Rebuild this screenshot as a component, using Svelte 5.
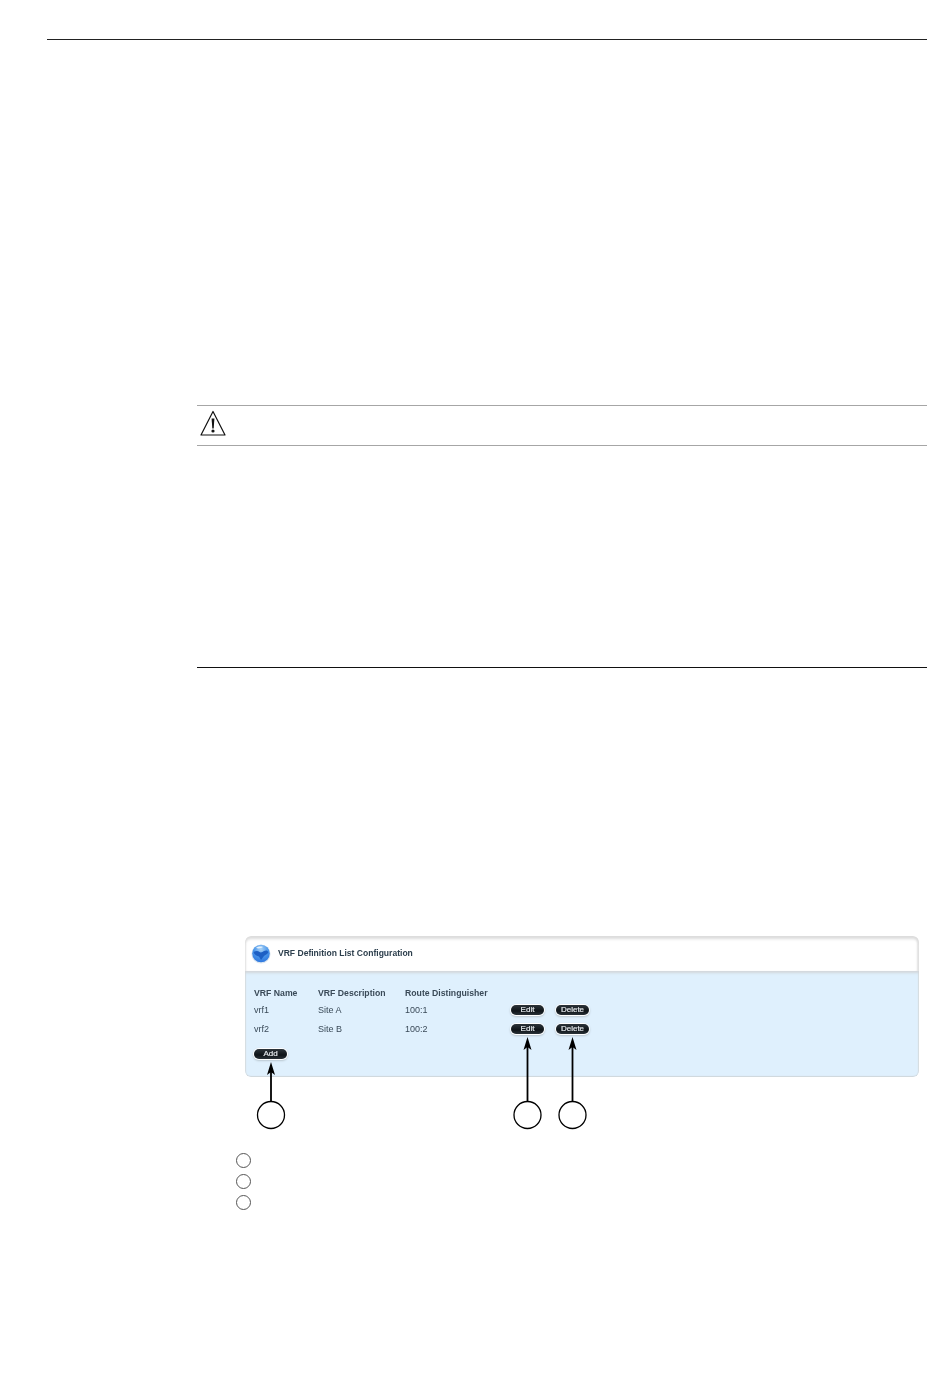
<script lang="ts">
  const rows = [
    { name: 'vrf1', description: 'Site A', distinguisher: '100:1' },
    { name: 'vrf2', description: 'Site B', distinguisher: '100:2' }
  ]
  // callout arrows, in figure coordinates
  const callouts = [
    { x: 26, tip: 126 },
    { x: 282.5, tip: 101 },
    { x: 327.5, tip: 101 }
  ]
  const legend = [1, 2, 3]
</script>

<div class="page">
  <hr class="top-rule" />

  <section class="warning">
    <div class="warning-head">
      <svg width="28" height="26" viewBox="0 0 28 26" aria-hidden="true">
        <path d="M14 1.5 L26 25 H2 Z" fill="none" stroke="#111" stroke-width="1.2" stroke-linejoin="round" />
        <path d="M12.6 8.5 H15.4 L14.7 18.5 H13.3 Z" fill="#111" />
        <circle cx="14" cy="21" r="1.6" fill="#111" />
      </svg>
    </div>
    <div class="warning-body"></div>
  </section>

  <figure class="figure">
    <div class="shot">
      <div class="shot-head">
        <svg class="globe" width="20" height="20" viewBox="0 0 20 20" aria-hidden="true">
          <defs>
            <radialGradient id="sphere" cx="50%" cy="25%" r="80%">
              <stop offset="0" stop-color="#a9d2f7" />
              <stop offset="0.5" stop-color="#4b97ea" />
              <stop offset="1" stop-color="#2a72dc" />
            </radialGradient>
          </defs>
          <circle cx="10" cy="10" r="9.6" fill="#dbe6f0" />
          <circle cx="10" cy="9.5" r="8.8" fill="url(#sphere)" />
          <path d="M2.5 8 C5 6.5 7 6.5 8.5 8 C10 9 11.5 8 13 7 C15 6 16.5 6.5 17.5 8 C16.5 10.5 14 11 13 12 L10 16 L8 12.5 C6 12 3.5 11 2.5 8 Z" fill="#1d5fc4" />
          <path d="M5 3.8 C7 2.4 10 2.2 12 3 C10.5 4.4 7 5 5 3.8 Z" fill="#e4f1fd" />
        </svg>
        <span class="shot-title">VRF Definition List Configuration</span>
      </div>
      <div class="shot-body">
        <div class="table">
          <span class="th">VRF Name</span>
          <span class="th">VRF Description</span>
          <span class="th">Route Distinguisher</span>
          <span></span>
          <span></span>
          {#each rows as row}
            <span class="td">{row.name}</span>
            <span class="td">{row.description}</span>
            <span class="td">{row.distinguisher}</span>
            <button class="pill">Edit</button>
            <button class="pill">Delete</button>
          {/each}
        </div>
        <button class="pill add">Add</button>
      </div>
    </div>

    <svg class="callouts" width="360" height="200" viewBox="0 0 360 200" aria-hidden="true">
      {#each callouts as c}
        <line x1={c.x} y1={c.tip + 6} x2={c.x} y2="170" stroke="#000" stroke-width="1.8" />
        <path d="M{c.x} {c.tip} L{c.x + 4} {c.tip + 13} L{c.x} {c.tip + 10} L{c.x - 4} {c.tip + 13} Z" fill="#000" />
        <circle cx={c.x} cy="179" r="13.5" fill="#fff" stroke="#000" stroke-width="1.3" />
      {/each}
    </svg>
  </figure>

  <ul class="legend">
    {#each legend as item (item)}
      <li class="legend-mark"></li>
    {/each}
  </ul>
</div>

<style>
  :global(body) {
    background: #fff;
  }

  .page {
    height: 1387px;
    padding: 39px 23px 0 47px;
    box-sizing: border-box;
    overflow: hidden;
    font-family: 'Liberation Sans', Arial, sans-serif;
  }

  .top-rule {
    margin: 0;
    border: 0;
    border-top: 1px solid #222;
  }

  .warning {
    margin: 365px 0 0 150px;
    border-bottom: 1px solid #111;
  }

  .warning-head {
    height: 34px;
    border-top: 1px solid #a6a6a6;
    border-bottom: 1px solid #a6a6a6;
    display: flex;
    align-items: center;
    padding: 0 0 5px 2px;
  }

  .warning-body {
    height: 221px;
  }

  .figure {
    position: relative;
    margin: 268px 8px 0 198px;
  }

  .shot {
    border-radius: 6px;
    overflow: hidden;
    filter: blur(0.35px);
  }

  .shot-head {
    height: 35px;
    display: flex;
    align-items: center;
    gap: 7px;
    padding: 0 0 2px 6px;
    box-sizing: border-box;
    background: #fff;
    border-radius: 6px 6px 0 0;
    box-shadow: inset 0 4px 3px -1px #dcdcdc, inset 2px 0 2px -1px #e2e2e2, inset -3px 0 2px -1px #e2e2e2;
  }

  .globe {
    margin-top: 2px;
  }

  .shot-title {
    font-size: 8.55px;
    font-weight: 700;
    color: #2c3e4c;
  }

  .shot-body {
    height: 106px;
    padding: 14px 9px 0;
    box-sizing: border-box;
    background: #dff0fd;
    border-radius: 0 0 6px 6px;
    box-shadow: inset 0 3px 3px -1px #d2d6d9, inset 0 -2px 1px -1px #cfd6db, inset 2px 0 1px -1px #d6dde2, inset -2px 0 1px -1px #d6dde2;
  }

  .table {
    display: grid;
    grid-template-columns: 64px 87px 105px 45px 40px;
    grid-template-rows: 15px 19px 19px;
    align-items: center;
    justify-items: start;
  }

  .th {
    font-size: 8.7px;
    font-weight: 700;
    color: #3a4a58;
    white-space: nowrap;
  }

  .td {
    font-size: 9px;
    color: #3a4a58;
  }

  .pill {
    width: 33px;
    height: 10px;
    margin-left: 1px;
    padding: 0;
    border: 0;
    border-radius: 6px;
    background: linear-gradient(#2d343a, #0f1418 60%, #2a3238);
    box-shadow: 0 0 0 1px #fff, 0 1px 2px 1px #b9c6d0;
    color: #e6eaee;
    font-family: inherit;
    font-size: 8px;
    font-weight: 400;
    -webkit-text-stroke: 0.2px #e6eaee;
    line-height: 10px;
  }

  .add {
    display: block;
    margin: 11px 0 0;
  }

  .callouts {
    position: absolute;
    left: 0;
    top: 0;
    pointer-events: none;
  }

  .legend {
    list-style: none;
    margin: 76px 0 0 189px;
    padding: 0;
    display: flex;
    flex-direction: column;
    gap: 6px;
  }

  .legend-mark {
    width: 15px;
    height: 15px;
    box-sizing: border-box;
    border: 1px solid #555;
    border-radius: 50%;
  }
</style>
